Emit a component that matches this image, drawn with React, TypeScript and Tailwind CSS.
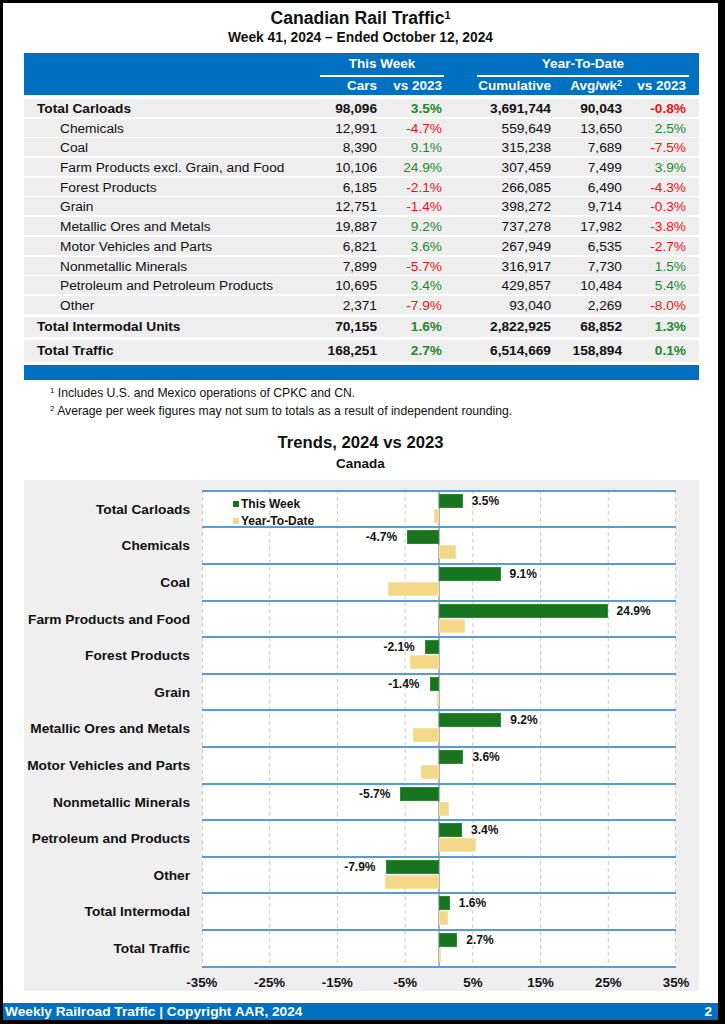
const rows = [
  { name: "Total Carloads", cars: "98,096", wk: "3.5%", cum: "3,691,744", avg: "90,043", ytd: "-0.8%", total: true },
  { name: "Chemicals", cars: "12,991", wk: "-4.7%", cum: "559,649", avg: "13,650", ytd: "2.5%" },
  { name: "Coal", cars: "8,390", wk: "9.1%", cum: "315,238", avg: "7,689", ytd: "-7.5%" },
  { name: "Farm Products excl. Grain, and Food", cars: "10,106", wk: "24.9%", cum: "307,459", avg: "7,499", ytd: "3.9%" },
  { name: "Forest Products", cars: "6,185", wk: "-2.1%", cum: "266,085", avg: "6,490", ytd: "-4.3%" },
  { name: "Grain", cars: "12,751", wk: "-1.4%", cum: "398,272", avg: "9,714", ytd: "-0.3%" },
  { name: "Metallic Ores and Metals", cars: "19,887", wk: "9.2%", cum: "737,278", avg: "17,982", ytd: "-3.8%" },
  { name: "Motor Vehicles and Parts", cars: "6,821", wk: "3.6%", cum: "267,949", avg: "6,535", ytd: "-2.7%" },
  { name: "Nonmetallic Minerals", cars: "7,899", wk: "-5.7%", cum: "316,917", avg: "7,730", ytd: "1.5%" },
  { name: "Petroleum and Petroleum Products", cars: "10,695", wk: "3.4%", cum: "429,857", avg: "10,484", ytd: "5.4%" },
  { name: "Other", cars: "2,371", wk: "-7.9%", cum: "93,040", avg: "2,269", ytd: "-8.0%" },
];

const totals = [
  { name: "Total Intermodal Units", cars: "70,155", wk: "1.6%", cum: "2,822,925", avg: "68,852", ytd: "1.3%", h: "h-[20px]" },
  { name: "Total Traffic", cars: "168,251", wk: "2.7%", cum: "6,514,669", avg: "158,894", ytd: "0.1%", h: "h-[22px]" },
];

const trends: [string, number, number][] = [
  ["Total Carloads", 3.5, -0.8],
  ["Chemicals", -4.7, 2.5],
  ["Coal", 9.1, -7.5],
  ["Farm Products and Food", 24.9, 3.9],
  ["Forest Products", -2.1, -4.3],
  ["Grain", -1.4, -0.3],
  ["Metallic Ores and Metals", 9.2, -3.8],
  ["Motor Vehicles and Parts", 3.6, -2.7],
  ["Nonmetallic Minerals", -5.7, 1.5],
  ["Petroleum and Products", 3.4, 5.4],
  ["Other", -7.9, -8.0],
  ["Total Intermodal", 1.6, 1.3],
  ["Total Traffic", 2.7, 0.1],
];

const cols = "grid grid-cols-[286px_67px_65px_109px_71px_64px_13px]";
const PLOT_W = 474;
const PX = PLOT_W / 70;
const ZERO = 35 * PX;

const pct = (v: string) => (v.startsWith("-") ? "text-[#ee1111]" : "text-[#23892b]");

function Row({ r, bold, h }: { r: any; bold?: boolean; h: string }) {
  return (
    <div className={`${cols} ${h} bg-[#eeeeee] items-center text-[13.7px] whitespace-nowrap ${bold ? "font-bold" : ""}`}>
      <div className={bold ? "pl-[13px]" : "pl-[36px]"}>{r.name}</div>
      <div className="text-right">{r.cars}</div>
      <div className={`text-right ${pct(r.wk)}`}>{r.wk}</div>
      <div className="text-right">{r.cum}</div>
      <div className="text-right">{r.avg}</div>
      <div className={`text-right ${pct(r.ytd)}`}>{r.ytd}</div>
      <div />
    </div>
  );
}

function Bar({ v, week }: { v: number; week: boolean }) {
  const w = Math.abs(v) * PX;
  const color = week ? "bg-[#18741f] border border-[#2b8a33]" : "bg-[#f3d88a] border border-[#f6e2a4]";
  if (v >= 0) {
    return (
      <div className="flex h-[14px] items-center">
        <div style={{ width: ZERO }} className="shrink-0" />
        <div style={{ width: w }} className={`h-full shrink-0 ${color}`} />
        {week && <span className="ml-[9px] text-[12px] font-bold leading-none">{v.toFixed(1)}%</span>}
      </div>
    );
  }
  return (
    <div className="flex h-[14px] items-center">
      <div style={{ width: ZERO - w }} className="shrink-0 flex justify-end pr-[10px]">
        {week && <span className="text-[12px] font-bold leading-none whitespace-nowrap">{v.toFixed(1)}%</span>}
      </div>
      <div style={{ width: w }} className={`h-full shrink-0 ${color}`} />
    </div>
  );
}

export default function App() {
  const grid = [-35, -25, -15, -5, 5, 15, 25, 35];
  return (
    <div className="w-[725px] h-[1024px] bg-black pt-[3px] pl-[3px] pr-[7px] pb-[4px] [font-family:'Liberation_Sans',Arial,sans-serif] text-[#111]">
      <div className="h-full bg-white flex flex-col">
        <div className="pt-[3px] h-[27px] text-center text-[17.6px] font-bold leading-[24px]">
          Canadian Rail Traffic<sup className="text-[11px]">1</sup>
        </div>
        <div className="h-[16px] text-center text-[13.8px] font-bold leading-[16px]">
          Week 41, 2024 – Ended October 12, 2024
        </div>

        <div className="ml-[21px] w-[675px] mt-[7px]">
          <div className="bg-[#0070c0] text-white font-bold text-[13.5px]">
            <div className={`${cols} h-[24px]`}>
              <div />
              <div className="col-span-2 ml-[10px] mr-[-2px] border-b-2 border-white text-center leading-[22px]">This Week</div>
              <div className="col-span-3 ml-[35px] mr-[-3px] border-b-2 border-white text-center leading-[22px]">Year-To-Date</div>
              <div />
            </div>
            <div className={`${cols} h-[18px] items-center leading-[18px]`}>
              <div />
              <div className="text-right">Cars</div>
              <div className="text-right">vs 2023</div>
              <div className="text-right">Cumulative</div>
              <div className="text-right">
                Avg/wk<sup className="text-[9px]">2</sup>
              </div>
              <div className="text-right">vs 2023</div>
              <div />
            </div>
          </div>

          <div className="mt-[4px] flex flex-col gap-[1.7px]">
            {rows.map((r) => (
              <Row key={r.name} r={r} bold={r.total} h="h-[18px]" />
            ))}
          </div>
          <div className="mt-[3px] flex flex-col gap-[3px]">
            {totals.map((r) => (
              <Row key={r.name} r={r} bold h={r.h} />
            ))}
          </div>
          <div className="mt-[3px] h-[15px] bg-[#0070c0]" />
        </div>

        <div className="mt-[4px] pl-[47px] text-[12.2px] leading-[18px]">
          <div>
            <sup className="text-[8px]">1</sup> Includes U.S. and Mexico operations of CPKC and CN.
          </div>
          <div>
            <sup className="text-[8px]">2</sup> Average per week figures may not sum to totals as a result of independent rounding.
          </div>
        </div>

        <div className="mt-[11px] h-[24px] text-center text-[16.7px] font-bold leading-[24px]">Trends, 2024 vs 2023</div>
        <div className="h-[18px] text-center text-[13.5px] font-bold leading-[18px]">Canada</div>

        <div className="ml-[21px] w-[675px] mt-[7px] h-[511px] bg-[#efefef] pt-[10px]">
          <div className="flex">
            <div className="w-[178px] pr-[12px] pt-[2px]">
              {trends.map(([n]) => (
                <div key={n} className="h-[36.6px] flex items-center justify-end text-[13.7px] font-bold whitespace-nowrap">
                  {n}
                </div>
              ))}
            </div>
            <div className="relative bg-white" style={{ width: PLOT_W }}>
              <svg className="absolute inset-0" width={PLOT_W} height="100%">
                {grid.map((g) => (
                  <line
                    key={g}
                    x1={(g + 35) * PX}
                    x2={(g + 35) * PX}
                    y1="0"
                    y2="100%"
                    stroke="#c9c9c9"
                    strokeWidth="1"
                    strokeDasharray="4 3"
                    transform={g === -35 ? "translate(0.5,0)" : g === 35 ? "translate(-0.5,0)" : undefined}
                  />
                ))}
                <line x1={ZERO} x2={ZERO} y1="0" y2="100%" stroke="#9a9a9a" strokeWidth="1.5" />
              </svg>
              <div className="relative border-b-2 border-[#5b9bd5]">
                {trends.map(([n, wk, ytd], i) => (
                  <div key={n} className="relative h-[36.6px] border-t-2 border-[#5b9bd5] pt-[2px] flex flex-col gap-[1px]">
                    <Bar v={wk} week />
                    <Bar v={ytd} week={false} />
                    {i === 0 && (
                      <div className="absolute left-[31px] top-[4px] text-[12px] font-bold leading-[17px]">
                        <div className="flex items-center gap-[2px]">
                          <span className="w-[6px] h-[6px] bg-[#18741f]" />
                          This Week
                        </div>
                        <div className="flex items-center gap-[2px]">
                          <span className="w-[6px] h-[6px] bg-[#f3d88a]" />
                          Year-To-Date
                        </div>
                      </div>
                    )}
                  </div>
                ))}
              </div>
            </div>
          </div>
          <div className="mt-[5px] ml-[144px] w-[542px] flex h-[20px] items-center">
            {grid.map((g) => (
              <div key={g} className="flex-1 text-center text-[13.3px] font-bold">
                {g}%
              </div>
            ))}
          </div>
        </div>

        <div className="mt-auto h-[17px] bg-[#0070c0] text-white font-bold text-[13.7px] leading-[17px] flex justify-between pl-[2px] pr-[6px]">
          <span>Weekly Railroad Traffic | Copyright AAR, 2024</span>
          <span>2</span>
        </div>
      </div>
    </div>
  );
}
